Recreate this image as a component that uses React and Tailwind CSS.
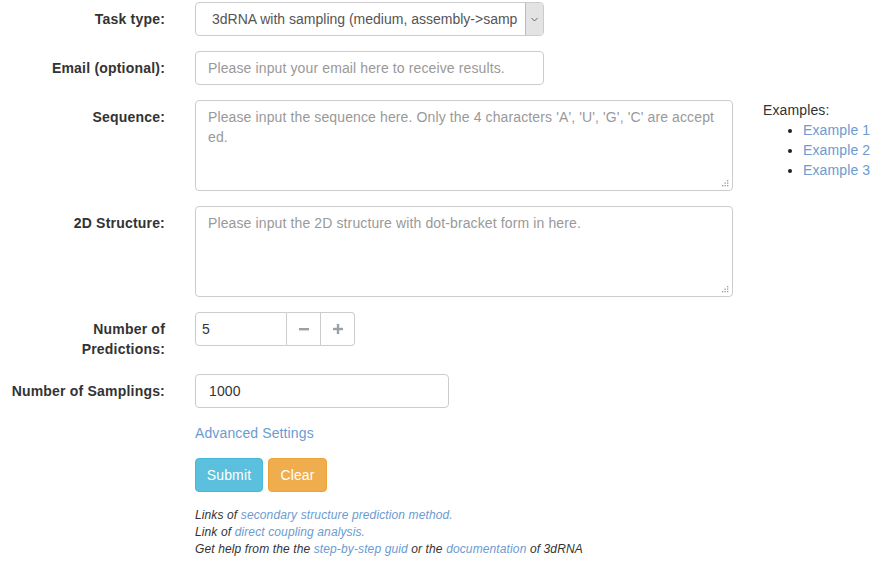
import React from "react";

const LINK = "text-[#6b9bd1]";

function Grip() {
  return (
    <svg className="absolute right-[3px] bottom-[3px]" width="7" height="7" viewBox="0 0 7 7">
      <rect x="5" y="0" width="1.3" height="1.3" fill="#999" />
      <rect x="5" y="2.5" width="1.3" height="1.3" fill="#999" />
      <rect x="2.5" y="2.5" width="1.3" height="1.3" fill="#999" />
      <rect x="5" y="5" width="1.3" height="1.3" fill="#999" />
      <rect x="2.5" y="5" width="1.3" height="1.3" fill="#999" />
      <rect x="0" y="5" width="1.3" height="1.3" fill="#999" />
    </svg>
  );
}

function Label({ children }) {
  return (
    <div className="w-[165px] shrink-0 pl-[9px] pt-[7px] text-right font-bold tracking-[0.2px] text-[#333]">
      {children}
    </div>
  );
}

export default function App() {
  return (
    <div className="w-[874px] h-[561px] overflow-hidden bg-white pt-[2px] font-['Liberation_Sans',Arial,sans-serif] text-[14px] leading-[20px] tracking-[0.12px] text-[#333]">
      {/* Task type */}
      <div className="flex mb-[15px]">
        <Label>Task type:</Label>
        <div className="ml-[30px] flex h-[34px] w-[349px] items-stretch rounded-[4px] border border-[#ccc] bg-white">
          <div className="flex-1 overflow-hidden whitespace-nowrap pl-[16px] pt-[6px] text-[#555] tracking-normal">
            3dRNA with sampling (medium, assembly-&gt;samp
          </div>
          <div className="flex w-[18px] items-center justify-center rounded-r-[3px] border-l border-[#bbb] bg-[#e3e3e3]">
            <svg width="7" height="5" viewBox="0 0 7 5">
              <path d="M0.5 1 L3.5 4 L6.5 1" fill="none" stroke="#666" strokeWidth="1" />
            </svg>
          </div>
        </div>
      </div>

      {/* Email */}
      <div className="flex mb-[15px]">
        <Label>Email (optional):</Label>
        <div className="ml-[30px] h-[34px] w-[349px] rounded-[4px] border border-[#ccc] px-[12px] pt-[6px] text-[#999] whitespace-nowrap overflow-hidden">
          Please input your email here to receive results.
        </div>
      </div>

      {/* Sequence */}
      <div className="flex mb-[15px]">
        <Label>Sequence:</Label>
        <div className="relative ml-[30px] h-[91px] w-[538px] rounded-[4px] border border-[#ccc] px-[12px] pt-[6px] text-[#999]">
          <div className="whitespace-nowrap">
            Please input the sequence here. Only the 4 characters 'A', 'U', 'G', 'C' are accept
          </div>
          <div>ed.</div>
          <Grip />
        </div>
        <div className="ml-[30px]">
          <div>Examples:</div>
          <ul className="list-disc pl-[40px] marker:text-[#222]">
            <li className={LINK}>Example 1</li>
            <li className={LINK}>Example 2</li>
            <li className={LINK}>Example 3</li>
          </ul>
        </div>
      </div>

      {/* 2D Structure */}
      <div className="flex mb-[15px]">
        <Label>2D Structure:</Label>
        <div className="relative ml-[30px] h-[91px] w-[538px] rounded-[4px] border border-[#ccc] px-[12px] pt-[6px] text-[#999]">
          Please input the 2D structure with dot-bracket form in here.
          <Grip />
        </div>
      </div>

      {/* Number of Predictions */}
      <div className="flex mb-[15px]">
        <Label>Number of Predictions:</Label>
        <div className="ml-[30px] flex h-[34px] self-start">
          <div className="w-[92px] rounded-l-[4px] border border-[#ccc] pl-[6px] pt-[6px] text-[#333]">5</div>
          <div className="flex w-[34px] items-center justify-center border-y border-r border-[#ccc]">
            <svg width="10" height="3" viewBox="0 0 10 3"><rect x="0" y="0" width="10" height="2.4" fill="#9aa0a8" /></svg>
          </div>
          <div className="flex w-[34px] items-center justify-center rounded-r-[4px] border-y border-r border-[#ccc]">
            <svg width="10" height="10" viewBox="0 0 10 10">
              <rect x="0" y="3.8" width="10" height="2.4" fill="#9aa0a8" />
              <rect x="3.8" y="0" width="2.4" height="10" fill="#9aa0a8" />
            </svg>
          </div>
        </div>
      </div>

      {/* Number of Samplings */}
      <div className="flex mb-[15px]">
        <Label>Number of Samplings:</Label>
        <div className="ml-[30px] h-[34px] w-[254px] rounded-[4px] border border-[#ccc] pl-[13px] pt-[6px] text-[#333]">
          1000
        </div>
      </div>

      {/* Advanced + buttons + links */}
      <div className="ml-[195px]">
        <div className={LINK}>Advanced Settings</div>
        <div className="mt-[15px] flex gap-[5px]">
          <div className="flex h-[34px] w-[68px] items-center justify-center rounded-[4px] border border-[#46b8da] bg-[#5bc0de] text-white">
            Submit
          </div>
          <div className="flex h-[34px] w-[59px] items-center justify-center rounded-[4px] border border-[#eea236] bg-[#f0ad4e] text-white">
            Clear
          </div>
        </div>
        <div className="mt-[15px] text-[12px] leading-[17px] italic text-[#333]">
          <div>
            Links of <span className={LINK}>secondary structure prediction method.</span>
          </div>
          <div>
            Link of <span className={LINK}>direct coupling analysis.</span>
          </div>
          <div>
            Get help from the the <span className={LINK}>step-by-step guid</span> or the{" "}
            <span className={LINK}>documentation</span> of 3dRNA
          </div>
        </div>
      </div>
    </div>
  );
}
